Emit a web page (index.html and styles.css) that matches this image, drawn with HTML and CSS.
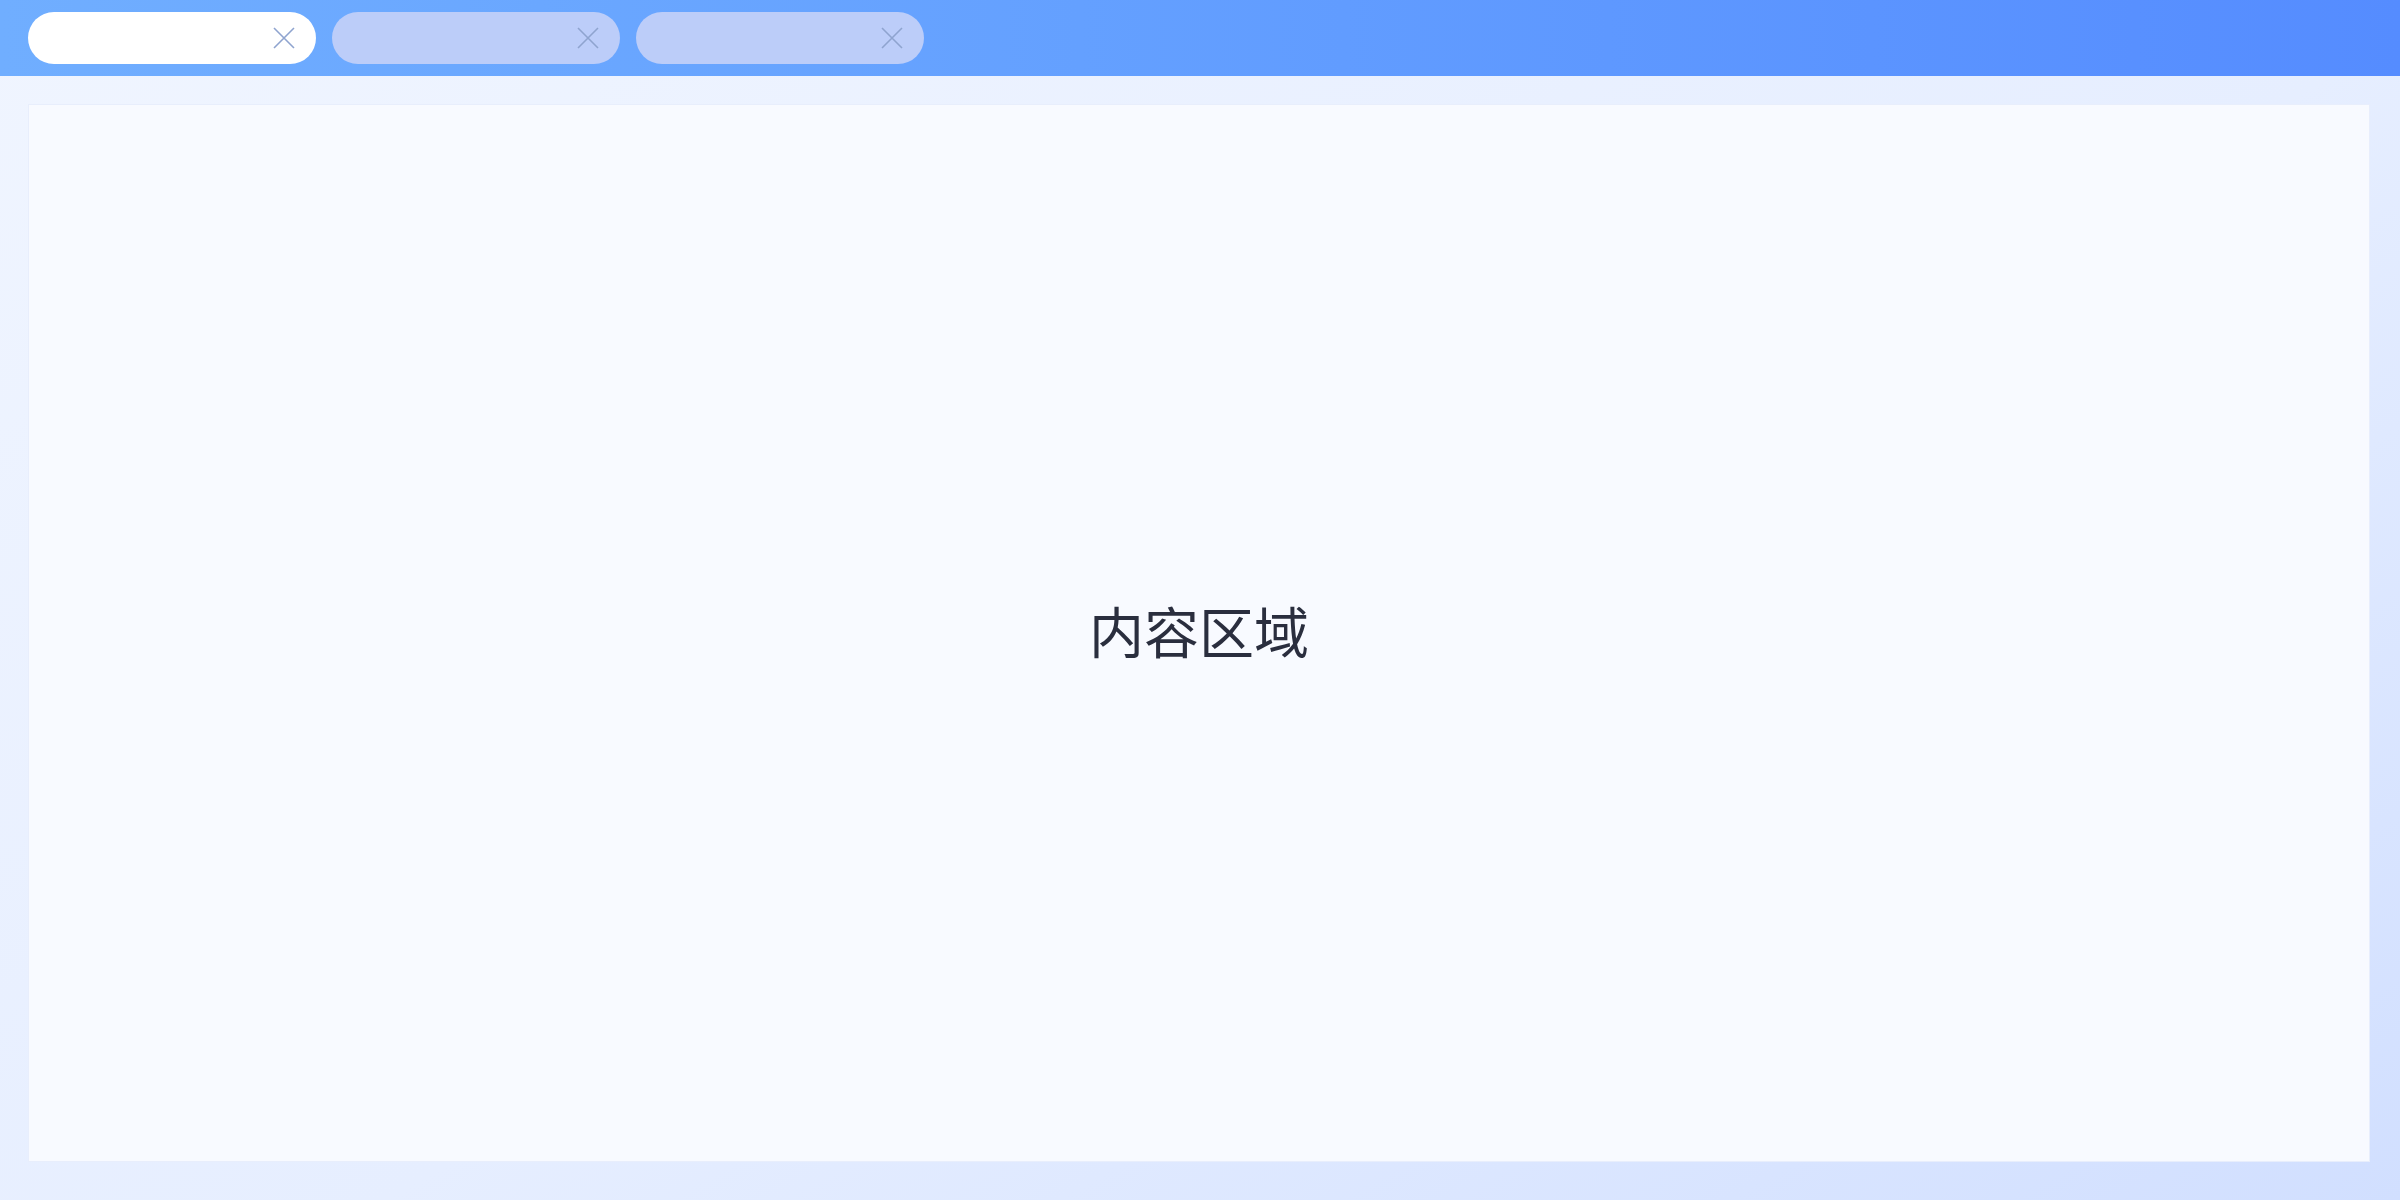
FILE: index.html
```html
<!DOCTYPE html>
<html lang="zh">
<head>
<meta charset="utf-8">
<title>内容区域</title>
<link rel="stylesheet" href="styles.css">
</head>
<body>
<div class="app">
  <header class="tabbar">
    <div class="tab active">
      <span class="tab-label"></span>
      <svg class="close" viewBox="0 0 22 22"><path d="M1 1 L21 21 M21 1 L1 21" /></svg>
    </div>
    <div class="tab">
      <span class="tab-label"></span>
      <svg class="close" viewBox="0 0 22 22"><path d="M1 1 L21 21 M21 1 L1 21" /></svg>
    </div>
    <div class="tab">
      <span class="tab-label"></span>
      <svg class="close" viewBox="0 0 22 22"><path d="M1 1 L21 21 M21 1 L1 21" /></svg>
    </div>
  </header>
  <main class="main">
    <section class="panel">
      <div class="panel-text">内容区域</div>
    </section>
  </main>
</div>
</body>
</html>
```
FILE: styles.css
```css
html, body {
  margin: 0;
  padding: 0;
  height: 100%;
}
body {
  font-family: "Noto Sans CJK SC", "Noto Sans", sans-serif;
}
.app {
  display: flex;
  flex-direction: column;
  height: 100vh;
  background: linear-gradient(150deg, #f0f5ff 0%, #e6eeff 55%, #d1dfff 100%);
}
.tabbar {
  height: 76px;
  flex: none;
  display: flex;
  align-items: center;
  gap: 16px;
  padding: 0 28px;
  box-sizing: border-box;
  background: linear-gradient(90deg, #70aeff 0%, #64a0ff 45%, #558cff 100%);
}
.tab {
  width: 288px;
  height: 52px;
  border-radius: 26px;
  background: #bccdf9;
  display: flex;
  align-items: center;
  justify-content: space-between;
  padding: 0 21px 0 24px;
  box-sizing: border-box;
}
.tab.active {
  background: #ffffff;
}
.close {
  width: 22px;
  height: 22px;
  fill: none;
  stroke: #8fa4cf;
  stroke-width: 1.6;
}
.main {
  flex: 1;
  padding: 28px 30px 38px 28px;
  display: flex;
  min-height: 0;
}
.panel {
  flex: 1;
  background: #f8faff;
  border: 1px solid #e8eefc;
  display: flex;
  align-items: center;
  justify-content: center;
}
.panel-text {
  font-size: 55px;
  color: #2a2e3e;
  line-height: 1;
  margin-bottom: 8px;
}
```
